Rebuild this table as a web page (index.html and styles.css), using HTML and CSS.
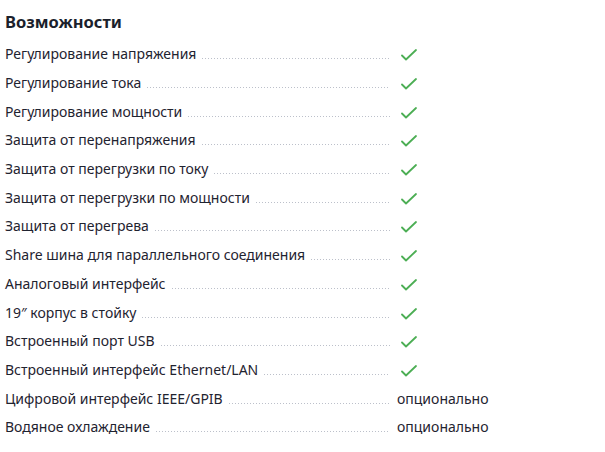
FILE: index.html
```html
<!DOCTYPE html>
<html lang="ru">
<head>
<meta charset="utf-8">
<link rel="stylesheet" href="styles.css">
</head>
<body>
<section class="features">
  <h2 class="title">Возможности</h2>
  <ul class="list">
    <li class="row"><span class="label">Регулирование напряжения</span><span class="leader"></span><span class="value"><svg class="check" viewBox="0 0 16 12"><path d="M1 6.5 L5 10.5 L15 1"/></svg></span></li>
    <li class="row"><span class="label">Регулирование тока</span><span class="leader"></span><span class="value"><svg class="check" viewBox="0 0 16 12"><path d="M1 6.5 L5 10.5 L15 1"/></svg></span></li>
    <li class="row"><span class="label">Регулирование мощности</span><span class="leader"></span><span class="value"><svg class="check" viewBox="0 0 16 12"><path d="M1 6.5 L5 10.5 L15 1"/></svg></span></li>
    <li class="row"><span class="label">Защита от перенапряжения</span><span class="leader"></span><span class="value"><svg class="check" viewBox="0 0 16 12"><path d="M1 6.5 L5 10.5 L15 1"/></svg></span></li>
    <li class="row"><span class="label">Защита от перегрузки по току</span><span class="leader"></span><span class="value"><svg class="check" viewBox="0 0 16 12"><path d="M1 6.5 L5 10.5 L15 1"/></svg></span></li>
    <li class="row"><span class="label">Защита от перегрузки по мощности</span><span class="leader"></span><span class="value"><svg class="check" viewBox="0 0 16 12"><path d="M1 6.5 L5 10.5 L15 1"/></svg></span></li>
    <li class="row"><span class="label">Защита от перегрева</span><span class="leader"></span><span class="value"><svg class="check" viewBox="0 0 16 12"><path d="M1 6.5 L5 10.5 L15 1"/></svg></span></li>
    <li class="row"><span class="label">Share шина для параллельного соединения</span><span class="leader"></span><span class="value"><svg class="check" viewBox="0 0 16 12"><path d="M1 6.5 L5 10.5 L15 1"/></svg></span></li>
    <li class="row"><span class="label">Аналоговый интерфейс</span><span class="leader"></span><span class="value"><svg class="check" viewBox="0 0 16 12"><path d="M1 6.5 L5 10.5 L15 1"/></svg></span></li>
    <li class="row"><span class="label">19″ корпус в стойку</span><span class="leader"></span><span class="value"><svg class="check" viewBox="0 0 16 12"><path d="M1 6.5 L5 10.5 L15 1"/></svg></span></li>
    <li class="row"><span class="label">Встроенный порт USB</span><span class="leader"></span><span class="value"><svg class="check" viewBox="0 0 16 12"><path d="M1 6.5 L5 10.5 L15 1"/></svg></span></li>
    <li class="row"><span class="label">Встроенный интерфейс Ethernet/LAN</span><span class="leader"></span><span class="value"><svg class="check" viewBox="0 0 16 12"><path d="M1 6.5 L5 10.5 L15 1"/></svg></span></li>
    <li class="row"><span class="label">Цифровой интерфейс IEEE/GPIB</span><span class="leader"></span><span class="value text">опционально</span></li>
    <li class="row"><span class="label">Водяное охлаждение</span><span class="leader"></span><span class="value text">опционально</span></li>
  </ul>
</section>
</body>
</html>
```

FILE: styles.css
```css
html, body {
  margin: 0;
  padding: 0;
  background: #ffffff;
}
body {
  font-family: "Noto Sans", "Open Sans", sans-serif;
  color: #1f2330;
}
.features {
  padding: 10px 0 0 5px;
  width: 492px;
}
.title {
  margin: 0 0 6px 0;
  font-size: 16.5px;
  font-weight: 700;
  line-height: 24px;
  color: #1b1f2c;
}
.list {
  list-style: none;
  margin: 0;
  padding: 0;
}
.row {
  display: flex;
  align-items: center;
  height: 28.7px;
  font-size: 14px;
  line-height: 20px;
}
.label {
  white-space: nowrap;
  padding-right: 6px;
}
.leader {
  flex: 1;
  align-self: center;
  height: 1px;
  margin-top: 9px;
  margin-right: 7px;
  background-image: linear-gradient(to right, #bcc0ca 1px, transparent 1px);
  background-size: 3px 1px;
  background-repeat: repeat-x;
}
.value {
  width: 100px;
  display: flex;
  align-items: center;
}
.value.text {
  font-size: 14px;
  color: #1f2330;
}
.check {
  width: 16px;
  height: 12px;
  margin-left: 4px;
  position: relative;
  top: 1px;
  fill: none;
  stroke: #4cae54;
  stroke-width: 1.8;
  stroke-linecap: round;
  stroke-linejoin: round;
}
```
